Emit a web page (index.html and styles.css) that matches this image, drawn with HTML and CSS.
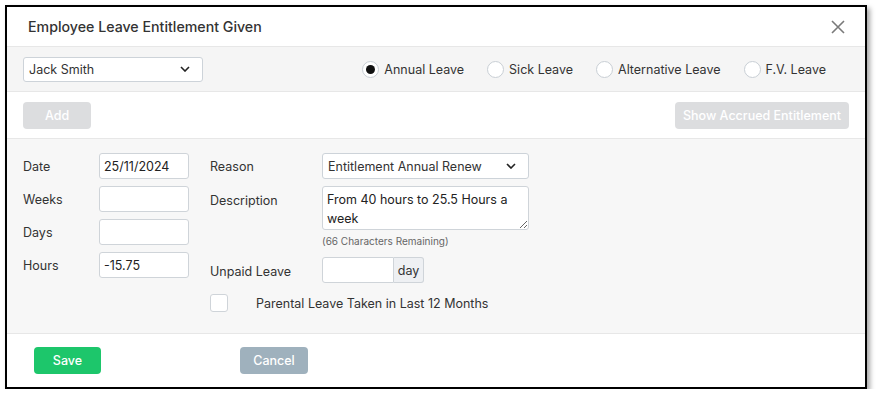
FILE: index.html
```html
<!DOCTYPE html>
<html>
<head>
<meta charset="utf-8">
<link rel="stylesheet" href="styles.css">
</head>
<body>
<div class="modal">
  <div class="modal-header">
    <h1 class="title">Employee Leave Entitlement Given</h1>
    <span class="close">
      <svg width="14" height="14" viewBox="0 0 14 14"><path d="M1 1L13 13M13 1L1 13" stroke="#7a7a7a" stroke-width="1.6" fill="none"/></svg>
    </span>
  </div>

  <div class="toolbar">
    <div class="select employee">
      <span>Jack Smith</span>
      <svg class="chev" width="10" height="6" viewBox="0 0 10 6"><path d="M1 1L5 5L9 1" stroke="#222" stroke-width="1.6" fill="none"/></svg>
    </div>
    <div class="radios">
      <label class="radio"><span class="dot checked"></span>Annual Leave</label>
      <label class="radio"><span class="dot"></span>Sick Leave</label>
      <label class="radio"><span class="dot"></span>Alternative Leave</label>
      <label class="radio"><span class="dot"></span>F.V. Leave</label>
    </div>
  </div>

  <div class="actions">
    <button class="btn btn-disabled btn-add">Add</button>
    <button class="btn btn-disabled btn-accrued">Show Accrued Entitlement</button>
  </div>

  <div class="form">
    <div class="col col-left">
      <div class="field"><span class="lbl">Date</span><input class="inp" value="25/11/2024"></div>
      <div class="field"><span class="lbl">Weeks</span><input class="inp" value=""></div>
      <div class="field"><span class="lbl">Days</span><input class="inp" value=""></div>
      <div class="field"><span class="lbl">Hours</span><input class="inp" value="-15.75"></div>
    </div>
    <div class="col col-right">
      <div class="field"><span class="lbl lbl-wide">Reason</span>
        <div class="select reason">
          <span>Entitlement Annual Renew</span>
          <svg class="chev" width="10" height="6" viewBox="0 0 10 6"><path d="M1 1L5 5L9 1" stroke="#222" stroke-width="1.6" fill="none"/></svg>
        </div>
      </div>
      <div class="field field-top"><span class="lbl lbl-wide lbl-top">Description</span>
        <div class="desc">
          <textarea class="area">From 40 hours to 25.5 Hours a week</textarea>
          <div class="hint">(66 Characters Remaining)</div>
        </div>
      </div>
      <div class="field unpaid"><span class="lbl lbl-wide lbl-low">Unpaid Leave</span>
        <div class="group">
          <input class="inp inp-group" value="">
          <span class="addon">day</span>
        </div>
      </div>
      <div class="check-row">
        <span class="box"></span>
        <span class="check-lbl">Parental Leave Taken in Last 12 Months</span>
      </div>
    </div>
  </div>

  <div class="footer">
    <button class="btn btn-save">Save</button>
    <button class="btn btn-cancel">Cancel</button>
  </div>
</div>
</body>
</html>
```

FILE: styles.css
```css
* { box-sizing: border-box; }

body {
  margin: 0;
  background: #fff;
  font-family: Inter, "Liberation Sans", sans-serif;
  font-size: 12.5px;
  color: #333;
}

.modal {
  margin: 5px 0 0 5px;
  width: 862px;
  height: 384px;
  border: 2px solid #000;
  background: #fff;
  box-shadow: 3px 3px 5px rgba(0, 0, 0, 0.35);
  display: flex;
  flex-direction: column;
}

.modal-header {
  height: 40px;
  border-bottom: 1px solid #e7e7e7;
  display: flex;
  align-items: center;
  justify-content: space-between;
  padding: 0 20px 0 21px;
}

.title {
  margin: 0;
  font-size: 14.2px;
  font-weight: 500;
  color: #333;
}

.close { display: flex; margin-top: 1px; }

.toolbar {
  height: 45px;
  background: #f5f5f5;
  border-bottom: 1px solid #e7e7e7;
  display: flex;
  align-items: center;
  justify-content: space-between;
  padding: 0 39px 0 16px;
}

.select {
  height: 25px;
  border: 1px solid #cdd3d9;
  border-radius: 3px;
  background: #fff;
  display: flex;
  align-items: center;
  justify-content: space-between;
  padding: 0 12px 0 5px;
  color: #333;
}

.employee { width: 180px; }

.radios { display: flex; gap: 23px; }

.radio {
  display: flex;
  align-items: center;
  gap: 5px;
  color: #333;
}

.dot {
  width: 17px;
  height: 17px;
  border-radius: 50%;
  border: 1px solid #c9cfd5;
  background: #fff;
  display: flex;
  align-items: center;
  justify-content: center;
}

.dot.checked::after {
  content: "";
  width: 9px;
  height: 9px;
  border-radius: 50%;
  background: #111;
}

.actions {
  height: 47px;
  border-bottom: 1px solid #e7e7e7;
  display: flex;
  align-items: center;
  justify-content: space-between;
  padding: 0 16px;
}

.btn {
  height: 27px;
  border: none;
  border-radius: 4px;
  font-family: inherit;
  font-size: 12.5px;
  font-weight: 500;
  color: #fff;
  padding: 0;
}

.btn-disabled { background: #dcdddf; }
.btn-add { width: 68px; }
.btn-accrued { width: 174px; }

.form {
  height: 195px;
  background: #f7f7f7;
  border-bottom: 1px solid #e7e7e7;
  display: flex;
  gap: 21px;
  padding: 14px 16px 0 16px;
}

.col { display: flex; flex-direction: column; gap: 7px; }

.field { display: flex; align-items: center; }
.field-top { align-items: flex-start; }

.lbl { width: 76px; color: #333; padding-top: 1px; }
.lbl-wide { width: 112px; }
.lbl-top { padding-top: 7px; }
.lbl-low { padding-top: 2px; }

.inp {
  width: 90px;
  height: 26px;
  border: 1px solid #cfd4d9;
  border-radius: 3px;
  background: #fff;
  font-family: inherit;
  font-size: 12.5px;
  color: #222;
  padding: 0 4px;
  margin: 0;
}

.reason { width: 207px; height: 26px; }

.desc { display: flex; flex-direction: column; }

.area {
  width: 207px;
  height: 44px;
  border: 1px solid #cfd4d9;
  border-radius: 3px;
  background: #fff;
  font-family: inherit;
  font-size: 12.5px;
  line-height: 19px;
  color: #222;
  padding: 3px 4px;
  margin: 0;
  resize: vertical;
  overflow: hidden;
}

.hint {
  font-size: 10px;
  color: #666;
  margin-top: 5px;
}

.unpaid { margin-top: 3px; }

.group { display: flex; }

.inp-group {
  width: 72px;
  border-radius: 3px 0 0 3px;
}

.addon {
  width: 30px;
  height: 26px;
  border: 1px solid #cfd4d9;
  border-left: none;
  border-radius: 0 3px 3px 0;
  background: #eef0f3;
  display: flex;
  align-items: center;
  justify-content: center;
  color: #333;
}

.check-row {
  display: flex;
  align-items: center;
  margin-top: 4px;
}

.box {
  width: 18px;
  height: 18px;
  border: 1px solid #cfd4d9;
  border-radius: 3px;
  background: #fff;
}

.check-lbl { margin-left: 28px; color: #333; }

.footer {
  flex: 1;
  display: flex;
  align-items: flex-start;
  gap: 139px;
  padding: 13px 0 0 27px;
}

.btn-save { width: 67px; background: #1dc66b; }
.btn-cancel { width: 68px; background: #9fb1bd; }
```
